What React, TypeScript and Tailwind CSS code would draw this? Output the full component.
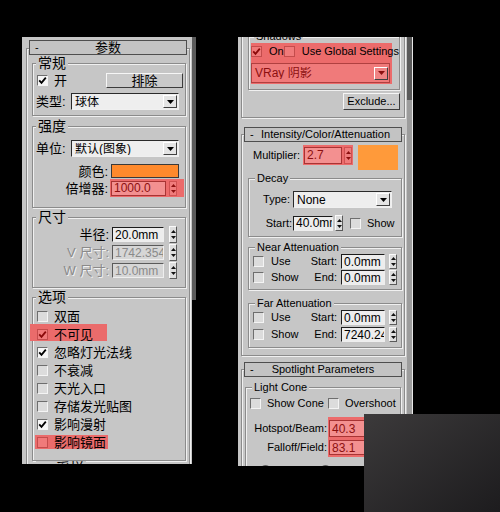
import type { ReactNode } from "react";

type P = { className?: string; children?: ReactNode };

const cx = (...c: (string | false | null | undefined)[]) => c.filter(Boolean).join(" ");

// etched frame used by rollouts and group boxes
const etched = "border border-[#8b8b8b] shadow-[inset_1px_1px_0_#f0f0f0,1px_1px_0_#f0f0f0]";
const CNL = "-top-[8px] left-[3px] text-[14px]";
const ENL = "-top-[6px] left-[6px] text-[11px]";

function Check({ on, red }: { on?: boolean; red?: boolean }) {
  return (
    <span
      className={cx(
        "flex h-[11px] w-[11px] shrink-0 items-center justify-center border",
        red
          ? "border-[#c44c4c] bg-[#f07a7a]"
          : "border-t-[#6e6e6e] border-l-[#6e6e6e] border-r-[#f4f4f4] border-b-[#f4f4f4]",
        !red && (on ? "bg-[#f6f6f6]" : "bg-[#dcdcdc]")
      )}
    >
      {on && (
        <svg width="9" height="9" viewBox="0 0 9 9">
          <path d="M1.2 4.3 3.5 6.8 7.8 1.6" fill="none" stroke={red ? "#8a0a0a" : "#000"} strokeWidth="1.8" />
        </svg>
      )}
    </span>
  );
}

function Spin({ red, className }: { red?: boolean; className?: string }) {
  const c = red ? "#8c1010" : "#111";
  return (
    <span
      className={cx(
        "flex w-[8px] shrink-0 flex-col items-center justify-center gap-[3px] border",
        red
          ? "border-[#d05252] bg-[#f07c7c]"
          : "border-t-[#fafafa] border-l-[#fafafa] border-r-[#5a5a5a] border-b-[#5a5a5a] bg-[#dedede]",
        className
      )}
    >
      <svg width="5" height="3" viewBox="0 0 5 3">
        <path d="M0 3 2.5 0 5 3Z" fill={c} />
      </svg>
      <svg width="5" height="3" viewBox="0 0 5 3">
        <path d="M0 0 5 0 2.5 3Z" fill={c} />
      </svg>
    </span>
  );
}

function Field({ className, children, tone = "n" }: P & { tone?: "n" | "dim" | "red" }) {
  const t =
    tone === "red"
      ? "border-[#a83434] bg-[#f39090] text-[#8c1010]"
      : tone === "dim"
        ? "border-t-[#5a5a5a] border-l-[#5a5a5a] border-r-[#eeeeee] border-b-[#eeeeee] bg-[#d6d6d6] text-[#8a8a8a]"
        : "border-t-[#1c1c1c] border-l-[#1c1c1c] border-r-[#eeeeee] border-b-[#eeeeee] bg-[#ededed] text-black";
  return (
    <span className={cx("flex shrink-0 items-center overflow-hidden whitespace-nowrap border pl-[2px] text-[12px] leading-none", t, className)}>
      {children}
    </span>
  );
}

function Drop({ className, children, red }: P & { red?: boolean }) {
  return (
    <span
      className={cx(
        "flex shrink-0 items-center border",
        red
          ? "border-[#b04040] bg-[#f07a7a] text-[#8c1010]"
          : "border-t-[#2a2a2a] border-l-[#2a2a2a] border-r-[#f0f0f0] border-b-[#f0f0f0] bg-[#eeeeee]",
        className
      )}
    >
      <span className="flex-1 overflow-hidden whitespace-nowrap pl-[3px] text-[12px] leading-none">{children}</span>
      <span
        className={cx(
          "mr-[1px] flex h-[13px] w-[14px] items-center justify-center border border-t-white border-l-white border-r-[#404040] border-b-[#404040]",
          red ? "bg-[#f08484]" : "bg-[#e4e4e4]"
        )}
      >
        <svg width="7" height="4" viewBox="0 0 7 4">
          <path d="M0 0h7L3.5 4Z" fill={red ? "#8c1010" : "#000"} />
        </svg>
      </span>
    </span>
  );
}

function Btn({ className, children }: P) {
  return (
    <span
      className={cx(
        "flex shrink-0 items-center justify-center border border-t-[#f6f6f6] border-l-[#f6f6f6] border-r-[#3c3c3c] border-b-[#3c3c3c] bg-[#c9c9c9] leading-none",
        className
      )}
    >
      {children}
    </span>
  );
}

function Group({ label, lc, className, children }: P & { label: ReactNode; lc: string }) {
  return (
    <div className={cx("relative shrink-0", etched, className)}>
      <span className={cx("absolute whitespace-nowrap bg-[#c6c6c6] px-[2px] leading-none", lc)}>{label}</span>
      {children}
    </div>
  );
}

function RollHead({ title, className }: { title: string; className: string }) {
  return (
    <div
      className={cx(
        "relative mx-[2px] grid h-[15px] shrink-0 grid-cols-[16px_1fr_16px] items-center border border-[#4e4e4e] bg-[#c3c3c3]",
        className
      )}
    >
      <span className="pl-[5px] text-[11px]">-</span>
      <span className="whitespace-nowrap text-center">{title}</span>
      <span />
    </div>
  );
}

function SizeRow({ label, v, dim, className }: { label: string; v: string; dim?: boolean; className?: string }) {
  return (
    <div className={cx("flex h-[15px] items-center", className)}>
      <span className={cx("w-[76px] text-right", dim && "text-[#8a8a8a] [text-shadow:1px_1px_0_#f2f2f2]")}>{label}</span>
      <Field tone={dim ? "dim" : "n"} className="ml-[3px] h-[15px] w-[52px]">
        {v}
      </Field>
      <Spin className="ml-[5px] h-[17px]" />
    </div>
  );
}

const options = [
  { t: "双面" },
  { t: "不可见", on: true, hl: "-left-[3px] top-[-1px] h-[17px] w-[77px]" },
  { t: "忽略灯光法线", on: true },
  { t: "不衰减" },
  { t: "天光入口" },
  { t: "存储发光贴图" },
  { t: "影响漫射", on: true },
  { t: "影响镜面", hl: "left-[2px] top-[2px] h-[14px] w-[73px]" },
];

function LeftPanel() {
  return (
    <div className="ml-[22px] flex h-[427px] w-[170px] shrink-0 flex-col overflow-hidden bg-[#c6c6c6] text-[13px] leading-none">
      <div className={cx("ml-[4px] mt-[11px] flex w-[164px] shrink-0 flex-col pb-[40px]", etched)}>
        <RollHead title="参数" className="-mt-[9px]" />

        <Group label="常规" lc={CNL} className="ml-[5px] mt-[8px] h-[53px] w-[154px] pt-[9px]">
          <div className="flex h-[15px] items-center">
            <span className="ml-[4px]">
              <Check on />
            </span>
            <span className="ml-[6px]">开</span>
            <Btn className="ml-auto mr-[2px] h-[15px] w-[77px]">排除</Btn>
          </div>
          <div className="mt-[5px] flex h-[17px] items-center">
            <span className="w-[38px] pl-[3px]">类型:</span>
            <Drop className="h-[17px] w-[108px]">球体</Drop>
          </div>
        </Group>

        <Group label="强度" lc={CNL} className="ml-[5px] mt-[10px] h-[82px] w-[154px] pt-[13px]">
          <div className="flex h-[17px] items-center">
            <span className="w-[38px] pl-[3px]">单位:</span>
            <Drop className="h-[17px] w-[108px]">默认(图象)</Drop>
          </div>
          <div className="mt-[7px] flex h-[14px] items-center">
            <span className="w-[75px] text-right">颜色:</span>
            <span className="ml-[3px] h-[14px] w-[68px] border border-[#3a3a3a] bg-[#ff8a2c]" />
          </div>
          <div className="mt-[1px] flex h-[18px] items-center">
            <span className="w-[75px] text-right">倍增器:</span>
            <span className="ml-[2px] flex h-[18px] w-[74px] items-center bg-[#ec6b6b] pl-[1px]">
              <Field tone="red" className="h-[15px] w-[55px]">
                1000.0
              </Field>
              <Spin red className="ml-[3px] h-[15px]" />
            </span>
          </div>
        </Group>

        <Group label="尺寸" lc={CNL} className="ml-[5px] mt-[9px] h-[71px] w-[154px] pt-[9px]">
          <SizeRow label="半径:" v="20.0mm" />
          <SizeRow label="V 尺寸:" v="1742.354mm" dim className="mt-[3px]" />
          <SizeRow label="W 尺寸:" v="10.0mm" dim className="mt-[3px]" />
        </Group>

        <Group label="选项" lc={CNL} className="ml-[5px] mt-[9px] h-[164px] w-[154px] pt-[9px]">
          {options.map((o) => (
            <div key={o.t} className="relative flex h-[18px] items-center">
              {o.hl && <span className={cx("absolute bg-[#ea6b6b]", o.hl)} />}
              <span className="relative ml-[4px]">
                <Check on={o.on} red={!!o.hl} />
              </span>
              <span className="relative ml-[6px]">{o.t}</span>
            </div>
          ))}
        </Group>

        <Group label="一 采样" lc="-top-[8px] left-[3px] text-[14px]" className="ml-[5px] mt-[7px] h-[60px] w-[154px]" />
      </div>
    </div>
  );
}

function AttRow({ a, b, v, className }: { a: string; b: string; v: string; className?: string }) {
  return (
    <div className={cx("flex h-[15px] items-center", className)}>
      <span className="ml-[4px]">
        <Check />
      </span>
      <span className="ml-[7px] w-[36px]">{a}</span>
      <span className="w-[30px] text-right">{b}</span>
      <Field className="ml-[4px] h-[15px] w-[44px]">{v}</Field>
      <Spin className="ml-[4px] h-[15px]" />
    </div>
  );
}

function Radio() {
  return (
    <span className="block h-[11px] w-[11px] shrink-0 rounded-full border border-t-[#5e5e5e] border-l-[#5e5e5e] border-r-[#f4f4f4] border-b-[#f4f4f4] bg-[#e2e2e2]" />
  );
}

function RightPanel() {
  return (
    <div className="flex h-[429px] w-[169px] shrink-0 flex-col overflow-hidden bg-[#c6c6c6] text-[11px] leading-none">
      {/* shadows rollout, scrolled up */}
      <div className={cx("-mt-[30px] ml-[3px] flex h-[111px] w-[164px] shrink-0 flex-col", etched)}>
        <Group label="Shadows" lc="-top-[6px] left-[5px] text-[11px]" className="ml-[6px] mt-[28px] h-[54px] w-[152px] pt-[6px]">
          <div className="ml-[2px] flex h-[41px] w-[141px] flex-col bg-[#ec6b6b] pt-[3px]">
            <div className="flex h-[11px] items-center">
              <Check on red />
              <span className="ml-[7px] w-[19px]">On</span>
              <Check red />
              <span className="ml-[7px] whitespace-nowrap">Use Global Settings</span>
            </div>
            <Drop red className="mt-[6px] h-[20px] w-[139px]">
              VRay 阴影
            </Drop>
          </div>
        </Group>
        <Btn className="mr-[4px] mt-[3px] h-[17px] w-[57px] self-end">Exclude...</Btn>
      </div>

      {/* intensity rollout */}
      <div className={cx("ml-[3px] mt-[16px] flex h-[222px] w-[164px] shrink-0 flex-col", etched)}>
        <RollHead title="Intensity/Color/Attenuation" className="-mt-[8px]" />
        <div className="mt-[3px] flex h-[25px] shrink-0 items-start pl-[11px]">
          <span className="flex h-[20px] w-[50px] items-center">Multiplier:</span>
          <span className="flex h-[20px] w-[50px] items-center bg-[#ec6b6b] pl-[1px]">
            <Field tone="red" className="h-[17px] w-[38px]">
              2.7
            </Field>
            <Spin red className="ml-[2px] h-[17px]" />
          </span>
          <span className="ml-[5px] h-[25px] w-[40px] bg-[#ff9a3a]" />
        </div>

        <Group label="Decay" lc={ENL} className="ml-[6px] mt-[8px] h-[59px] w-[154px] pt-[12px]">
          <div className="flex h-[17px] items-center">
            <span className="w-[42px] pr-[1px] text-right">Type:</span>
            <Drop className="ml-[2px] h-[17px] w-[99px]">None</Drop>
          </div>
          <div className="mt-[7px] flex h-[16px] items-center">
            <span className="w-[43px] text-right">Start:</span>
            <Field className="ml-[1px] h-[15px] w-[40px]">40.0mm</Field>
            <Spin className="ml-[2px] h-[16px]" />
            <span className="ml-[7px]">
              <Check />
            </span>
            <span className="ml-[6px]">Show</span>
          </div>
        </Group>

        <Group label="Near Attenuation" lc={ENL} className="ml-[6px] mt-[10px] h-[43px] w-[154px] pt-[6px]">
          <AttRow a="Use" b="Start:" v="0.0mm" />
          <AttRow a="Show" b="End:" v="0.0mm" className="mt-[1px]" />
        </Group>

        <Group label="Far Attenuation" lc={ENL} className="ml-[6px] mt-[13px] h-[45px] w-[154px] pt-[6px]">
          <AttRow a="Use" b="Start:" v="0.0mm" />
          <AttRow a="Show" b="End:" v="7240.24" className="mt-[2px]" />
        </Group>
      </div>

      {/* spotlight rollout */}
      <div className={cx("ml-[3px] mt-[13px] flex w-[164px] shrink-0 flex-col pb-[40px]", etched)}>
        <RollHead title="Spotlight Parameters" className="-mt-[8px]" />
        <Group label="Light Cone" lc={ENL} className="ml-[3px] mt-[10px] w-[156px] pb-[20px] pt-[9px]">
          <div className="flex h-[12px] items-center">
            <span className="ml-[4px]">
              <Check />
            </span>
            <span className="ml-[6px] w-[55px] whitespace-nowrap">Show Cone</span>
            <span className="ml-[6px]">
              <Check />
            </span>
            <span className="ml-[6px]">Overshoot</span>
          </div>
          <div className="mt-[8px] flex">
            <div className="flex w-[81px] flex-col items-end pt-[3px]">
              <span className="flex h-[17px] items-center whitespace-nowrap">Hotspot/Beam:</span>
              <span className="mt-[3px] flex h-[15px] items-center whitespace-nowrap">Falloff/Field:</span>
            </div>
            <div className="ml-[1px] flex h-[40px] w-[70px] flex-col bg-[#ec6b6b] pl-[1px] pt-[3px]">
              <Field tone="red" className="h-[17px] w-[60px]">
                40.3
              </Field>
              <Field tone="red" className="mt-[3px] h-[15px] w-[60px]">
                83.1
              </Field>
            </div>
          </div>
          <div className="mt-[7px] flex h-[12px] items-center">
            <span className="ml-[14px]">
              <Radio />
            </span>
            <span className="ml-[5px]">Circle</span>
            <span className="ml-[16px]">
              <Radio />
            </span>
            <span className="ml-[5px]">Rectangle</span>
          </div>
        </Group>
      </div>
    </div>
  );
}

export default function App() {
  return (
    <div className="relative flex h-[512px] w-[500px] items-start overflow-hidden bg-black pt-[37px] font-['Liberation_Sans','Noto_Sans_CJK_SC',sans-serif] text-black">
      <LeftPanel />
      <div className="h-[263px] w-[4px] shrink-0 bg-[#5c5c5c]" />
      <div className="ml-[42px] flex shrink-0">
        <RightPanel />
        <div className="flex h-[429px] w-[6px] flex-col border-r border-[#e8e8e8]">
          <div className="h-[63px] bg-[#5a5a5a]" />
          <div className="flex-1 bg-[#9c9c9c]" />
        </div>
      </div>
      <div className="absolute left-[364px] top-[414px] h-[98px] w-[136px] bg-linear-to-br from-[#3c3a3b] to-[#1d1c1e]" />
    </div>
  );
}
